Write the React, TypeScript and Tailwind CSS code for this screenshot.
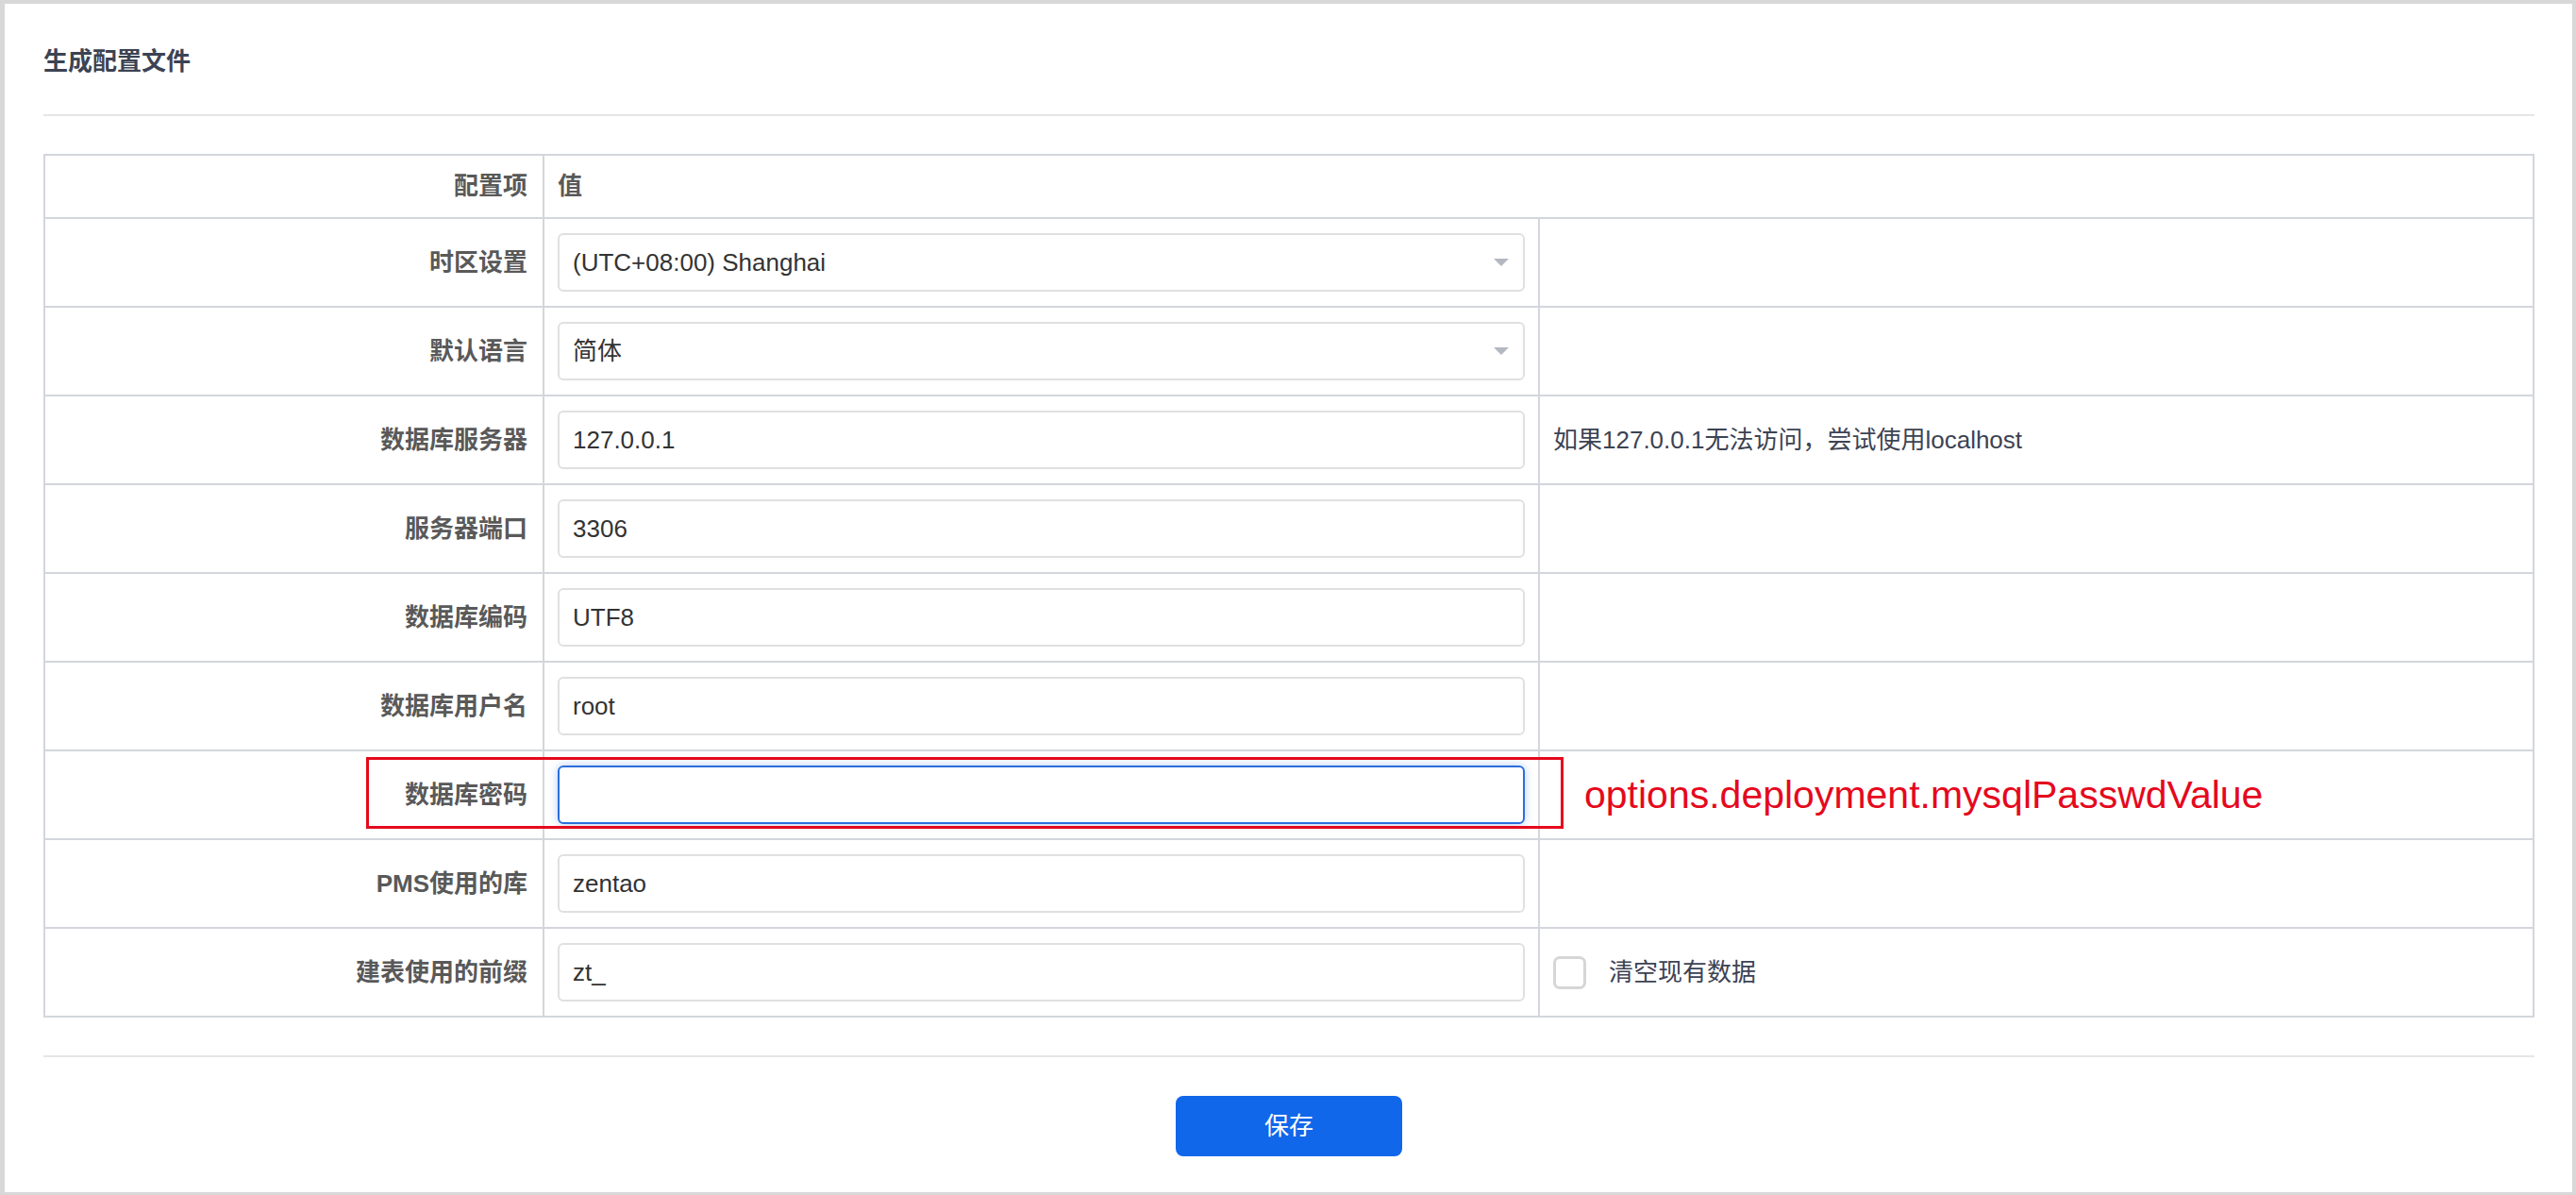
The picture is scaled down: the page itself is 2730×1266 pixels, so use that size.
const FONT = '"Liberation Sans", "Noto Sans CJK SC", sans-serif';

type Row = {
  label: string;
  kind: 'select' | 'input' | 'focus';
  value: string;
  extra?: 'hint' | 'annotation' | 'checkbox';
};

const ROWS: Row[] = [
  { label: '时区设置', kind: 'select', value: '(UTC+08:00) Shanghai' },
  { label: '默认语言', kind: 'select', value: '简体' },
  { label: '数据库服务器', kind: 'input', value: '127.0.0.1', extra: 'hint' },
  { label: '服务器端口', kind: 'input', value: '3306' },
  { label: '数据库编码', kind: 'input', value: 'UTF8' },
  { label: '数据库用户名', kind: 'input', value: 'root' },
  { label: '数据库密码', kind: 'focus', value: '', extra: 'annotation' },
  { label: 'PMS使用的库', kind: 'input', value: 'zentao' },
  { label: '建表使用的前缀', kind: 'input', value: 'zt_', extra: 'checkbox' },
];

function Field({ row }: { row: Row }) {
  if (row.kind === 'select') {
    return (
      <div className="h-[62px] w-full border-2 border-[#e0e0e0] rounded-[6px] px-[14px] flex items-center justify-between bg-white">
        <span className="text-[26px] text-[#333333]">{row.value}</span>
        <svg width="16" height="8" viewBox="0 0 16 8" className="mr-[1px]">
          <path d="M0 0 L16 0 L8 8 Z" fill="#b3b8c1" />
        </svg>
      </div>
    );
  }
  if (row.kind === 'focus') {
    return (
      <div className="h-[62px] w-full border-2 border-[#2a6fdb] rounded-[6px] bg-white shadow-[0_0_10px_rgba(42,111,219,0.35)]" />
    );
  }
  return (
    <div className="h-[62px] w-full border-2 border-[#e0e0e0] rounded-[6px] px-[14px] flex items-center bg-white">
      <span className="text-[26px] text-[#333333]">{row.value}</span>
    </div>
  );
}

function Extra({ row }: { row: Row }) {
  if (row.extra === 'hint') {
    return <span className="text-[26px] text-[#3c4353]">如果127.0.0.1无法访问，尝试使用localhost</span>;
  }
  if (row.extra === 'annotation') {
    return <span className="text-[41px] text-[#e5091d] pl-[33px] leading-none">options.deployment.mysqlPasswdValue</span>;
  }
  if (row.extra === 'checkbox') {
    return (
      <div className="flex items-center gap-[24px]">
        <div className="w-[35px] h-[35px] border-[3px] border-[#d6d6d6] rounded-[7px] bg-white" />
        <span className="text-[26px] text-[#3c4353]">清空现有数据</span>
      </div>
    );
  }
  return null;
}

export default function App() {
  return (
    <div className="h-[1266px] bg-[#d8d8d8] pt-[4px] pl-[5px] pr-[4px] pb-[3px]" style={{ fontFamily: FONT }}>
      <div className="h-full bg-white pl-[41px] pr-[40px]">
        <h1 className="pt-[44px] text-[26px] leading-[34px] font-bold text-[#3c4353]">生成配置文件</h1>
        <div className="mt-[39px] h-[2px] bg-[#e6e6e6]" />

        <div className="relative mt-[40px]">
          <table className="w-full border-collapse table-fixed">
            <colgroup>
              <col className="w-[529px]" />
              <col className="w-[1055px]" />
              <col />
            </colgroup>
            <tbody>
              <tr className="h-[67px]">
                <td className="border-2 border-[#d3d6dc] text-right pr-[16px] text-[26px] font-bold text-[#595959]">配置项</td>
                <td colSpan={2} className="border-2 border-[#d3d6dc] pl-[14px] text-[26px] font-bold text-[#595959]">值</td>
              </tr>
              {ROWS.map(row => (
                <tr key={row.label} className="h-[94px]">
                  <td className="border-2 border-[#d3d6dc] text-right pr-[16px] text-[26px] font-bold text-[#595959]">{row.label}</td>
                  <td className="border-2 border-[#d3d6dc] px-[14px]">
                    <Field row={row} />
                  </td>
                  <td className="border-2 border-[#d3d6dc] pl-[14px]">
                    <Extra row={row} />
                  </td>
                </tr>
              ))}
            </tbody>
          </table>
          {/* annotation frame around the password row */}
          <div className="absolute left-[342px] top-[639px] w-[1269px] h-[76px] border-[3px] border-[#e5091d] pointer-events-none" />
        </div>

        <div className="mt-[40px] h-[2px] bg-[#e6e6e6]" />
        <div className="flex justify-center mt-[41px]">
          <button className="w-[240px] h-[64px] bg-[#1067e9] rounded-[8px] text-white text-[26px]">保存</button>
        </div>
      </div>
    </div>
  );
}
